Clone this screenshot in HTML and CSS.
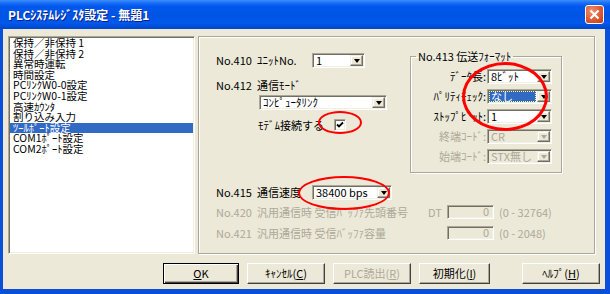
FILE: index.html
```html
<!DOCTYPE html>
<html lang="ja">
<head>
  <meta charset="UTF-8">
  <title>PLCシステムレジスタ設定</title>
  <link rel="stylesheet" href="styles.css">
</head>
<body>

  <div class="window">
    <div class="titlebar">
      <span class="title">PLCｼｽﾃﾑﾚｼﾞｽﾀ設定 - 無題1</span>
      <span class="close">
        <svg width="11" height="11" viewBox="0 0 11 11"><path d="M1.5 1.5 L9.5 9.5 M9.5 1.5 L1.5 9.5" stroke="#fff" stroke-width="2.2" fill="none"/></svg>
      </span>
    </div>

    <div class="frame">
      <div class="client">
        <div class="main">
          <ul class="list">
            <li>保持／非保持 1</li>
            <li>保持／非保持 2</li>
            <li>異常時運転</li>
            <li>時間設定</li>
            <li>PCﾘﾝｸW0-0設定</li>
            <li>PCﾘﾝｸW0-1設定</li>
            <li>高速ｶｳﾝﾀ</li>
            <li>割り込み入力</li>
            <li class="sel">ﾂｰﾙﾎﾟｰﾄ設定</li>
            <li>COM1ﾎﾟｰﾄ設定</li>
            <li>COM2ﾎﾟｰﾄ設定</li>
          </ul>

          <div class="page">
            <div class="top">
              <div class="left-col">
                <div class="row">
                  <span class="no">No.410</span>
                  <span class="name">ﾕﾆｯﾄNo.</span>
                  <div class="combo unit"><span class="val">1</span><span class="arrow"></span></div>
                </div>
                <div class="row mode">
                  <span class="no">No.412</span>
                  <span class="name">通信ﾓｰﾄﾞ</span>
                </div>
                <div class="combo link"><span class="val">ｺﾝﾋﾟｭｰﾀﾘﾝｸ</span><span class="arrow"></span></div>
                <div class="row modem">
                  <span class="modem-label">ﾓﾃﾞﾑ接続する</span>
                  <span class="check">
                    <svg width="8" height="8" viewBox="0 0 8 8"><path d="M1 3.5 L3 5.5 L7 1.5" stroke="#000" stroke-width="1.8" fill="none"/></svg>
                  </span>
                </div>
              </div>

              <fieldset class="group">
                <legend>No.413 伝送ﾌｫｰﾏｯﾄ</legend>
                <div class="fmt">
                  <span class="lbl">ﾃﾞｰﾀ長:</span>
                  <div class="combo"><span class="val">8ﾋﾞｯﾄ</span><span class="arrow"></span></div>
                  <span class="lbl">ﾊﾟﾘﾃｨﾁｪｯｸ:</span>
                  <div class="combo"><span class="val focus">なし</span><span class="arrow"></span></div>
                  <span class="lbl">ｽﾄｯﾌﾟﾋﾞｯﾄ:</span>
                  <div class="combo"><span class="val">1</span><span class="arrow"></span></div>
                  <span class="lbl off">終端ｺｰﾄﾞ:</span>
                  <div class="combo disabled"><span class="val">CR</span><span class="arrow"></span></div>
                  <span class="lbl off">始端ｺｰﾄﾞ:</span>
                  <div class="combo disabled"><span class="val">STX無し</span><span class="arrow"></span></div>
                </div>
              </fieldset>
            </div>

            <div class="row speed">
              <span class="no">No.415</span>
              <span class="name">通信速度</span>
              <div class="combo baud"><span class="val">38400 bps</span><span class="arrow"></span></div>
            </div>
            <div class="row buf off">
              <span class="no">No.420</span>
              <span class="long">汎用通信時 受信ﾊﾞｯﾌｧ先頭番号</span>
              <span class="dt">DT</span>
              <span class="field">0</span>
              <span class="range">(0 - 32764)</span>
            </div>
            <div class="row buf off">
              <span class="no">No.421</span>
              <span class="long">汎用通信時 受信ﾊﾞｯﾌｧ容量</span>
              <span class="dt"></span>
              <span class="field">0</span>
              <span class="range">(0 - 2048)</span>
            </div>

            <!-- red marks drawn over the form -->
            <div class="mark mark-check"></div>
            <div class="mark mark-format"></div>
            <div class="mark mark-baud"></div>
          </div>
        </div>

        <div class="buttons">
          <button class="btn default"><u>O</u>K</button>
          <button class="btn">ｷｬﾝｾﾙ(<u>C</u>)</button>
          <button class="btn" disabled>PLC読出(<u>R</u>)</button>
          <button class="btn init">初期化(<u>I</u>)</button>
          <button class="btn help">ﾍﾙﾌﾟ(<u>H</u>)</button>
        </div>
      </div>
    </div>
  </div>

</body>
</html>
```

FILE: styles.css
```css
* {
  box-sizing: border-box;
}
body {
  margin: 0;
  width: 610px;
  height: 294px;
  overflow: hidden;
  font-family: "Noto Sans CJK JP", sans-serif;
  font-size: 11px;
  line-height: 13px;
  color: #000;
}
.window {
  height: 294px;
  display: flex;
  flex-direction: column;
  background: #0054e3;
}

/* title bar */
.titlebar {
  height: 29px;
  flex: none;
  display: flex;
  align-items: center;
  justify-content: space-between;
  padding: 0 6px 0 8px;
  background: linear-gradient(#3c8ef9 0%, #1a6ff5 10%, #0058ee 22%, #0054e3 55%, #0058ec 80%, #0046c8 100%);
}
.title {
  color: #fff;
  font-weight: bold;
  font-size: 12px;
  text-shadow: 1px 1px #0a1f8c;
}
.close {
  width: 19px;
  height: 19px;
  border: 1px solid #fff;
  border-radius: 3px;
  display: flex;
  align-items: center;
  justify-content: center;
  background: radial-gradient(circle at 35% 30%, #f0906c, #dc5a33 55%, #c23c12);
}

/* blue frame and client area */
.frame {
  flex: 1;
  padding: 0 5px 5px 3px;
  background: #0a4fd9;
}
.client {
  height: 100%;
  background: #ece9d8;
}
.main {
  display: flex;
  gap: 3px;
  padding: 7px 0 0 5px;
}

/* list on the left */
.list {
  margin: 0;
  padding: 1px 0 0;
  list-style: none;
  width: 187px;
  height: 218px;
  background: #fff;
  border: 1px solid;
  border-color: #aca899 #fff #fff #aca899;
  box-shadow: inset 1px 1px #716f64, inset -1px -1px #f1efe2;
}
.list li {
  height: 10.6px;
  line-height: 10.6px;
  font-size: 10.5px;
  margin: 0 1px;
  padding-left: 3px;
  white-space: nowrap;
}
.list li.sel {
  background: #316ac5;
  color: #fff;
}

/* property page */
.page {
  position: relative;
  width: 397px;
  height: 218px;
  padding-left: 17px;
  border: 1px solid #aca899;
  box-shadow: inset 1px 1px #fff, 1px 1px #fff;
}
.top {
  display: flex;
  margin-top: 13px;
}
.left-col {
  width: 194px;
  padding-top: 3px;
}
.row {
  display: flex;
  align-items: center;
  height: 15px;
  white-space: nowrap;
}
.no {
  width: 41px;
  flex: none;
}
.name {
  width: 55px;
  flex: none;
}
.row.mode {
  margin-top: 10px;
}
.row.modem {
  margin-top: 8px;
  height: 14px;
  padding-left: 42px;
}
.modem-label {
  width: 76px;
}
.check {
  width: 12px;
  height: 12px;
  display: flex;
  align-items: center;
  justify-content: center;
  background: #fff;
  border: 1px solid;
  border-color: #aca899 #fff #fff #aca899;
  box-shadow: inset 1px 1px #716f64, inset -1px -1px #f1efe2;
}

/* drop-down boxes */
.combo {
  display: flex;
  height: 15px;
  background: #fff;
  border: 1px solid;
  border-color: #aca899 #fff #fff #aca899;
  box-shadow: inset 1px 1px #716f64, inset -1px -1px #f1efe2;
  padding: 1px;
}
.combo .val {
  flex: 1;
  line-height: 11px;
  padding-left: 2px;
  white-space: nowrap;
}
.combo .val.focus {
  background: #316ac5;
  color: #fff;
  outline: 1px dotted #ffff80;
  outline-offset: -1px;
  margin-right: 1px;
}
.combo .arrow {
  width: 13px;
  flex: none;
  display: flex;
  align-items: center;
  justify-content: center;
  background: #ece9d8;
  border: 1px solid;
  border-color: #f1efe2 #716f64 #716f64 #f1efe2;
  box-shadow: inset -1px -1px #aca899, inset 1px 1px #fff;
}
.combo .arrow::after {
  content: "";
  border-left: 3.5px solid transparent;
  border-right: 3.5px solid transparent;
  border-top: 4px solid #000;
}
.combo.disabled {
  background: #ece9d8;
  color: #aca899;
}
.combo.disabled .arrow::after {
  border-top-color: #aca899;
}
.combo.unit {
  width: 53px;
}
.combo.link {
  width: 128px;
  margin: 2px 0 0 43px;
}
.combo.baud {
  width: 80px;
}

/* transfer format group */
.group {
  margin: 0;
  width: 152px;
  padding: 6px 9px 8px 0;
  border: 1px solid #aca899;
  box-shadow: inset 1px 1px #fff, 1px 1px #fff;
}
.group legend {
  margin-left: 5px;
  padding: 0 2px;
  line-height: 13px;
}
.fmt {
  display: grid;
  grid-template-columns: 75px 65px;
  grid-auto-rows: 15px;
  column-gap: 1px;
  row-gap: 5px;
}
.lbl {
  text-align: right;
  white-space: nowrap;
  line-height: 15px;
}
.off,
.off .dt,
.off .range {
  color: #aca899;
}

/* lower rows */
.row.speed {
  margin-top: 12px;
}
.row.buf {
  margin-top: 5px;
  height: 14px;
}
.row.buf + .row.buf {
  margin-top: 7px;
}
.long {
  width: 171px;
  flex: none;
}
.dt {
  width: 19px;
  flex: none;
}
.field {
  width: 47px;
  height: 14px;
  flex: none;
  text-align: right;
  padding-right: 4px;
  line-height: 11px;
  background: #ece9d8;
  border: 1px solid;
  border-color: #aca899 #fff #fff #aca899;
  box-shadow: inset 1px 1px #716f64, inset -1px -1px #f1efe2;
}
.range {
  margin-left: 5px;
}

/* red annotations */
.mark {
  position: absolute;
  border: 2px solid #f00;
  border-radius: 50%;
}
.mark-check {
  left: 119px;
  top: 74px;
  width: 44px;
  height: 23px;
}
.mark-format {
  left: 263px;
  top: 25px;
  width: 86px;
  height: 69px;
  border-width: 3px;
}
.mark-baud {
  left: 99px;
  top: 139px;
  width: 92px;
  height: 34px;
}

/* buttons */
.buttons {
  display: flex;
  justify-content: flex-end;
  gap: 8px;
  margin-top: 9px;
  padding-right: 5px;
}
.btn {
  width: 78px;
  height: 21px;
  padding: 0;
  font: inherit;
  color: #000;
  background: #ece9d8;
  border: 1px solid;
  border-color: #fff #404040 #404040 #fff;
  box-shadow: inset -1px -1px #aca899;
}
.btn.default {
  width: 76px;
  border: 1px solid #000;
  box-shadow: inset 1px 1px #fff, inset -1px -1px #404040, inset -2px -2px #aca899;
}
.btn:disabled {
  color: #aca899;
}
.btn.init {
  width: 71px;
  margin-right: 24px;
}
```
